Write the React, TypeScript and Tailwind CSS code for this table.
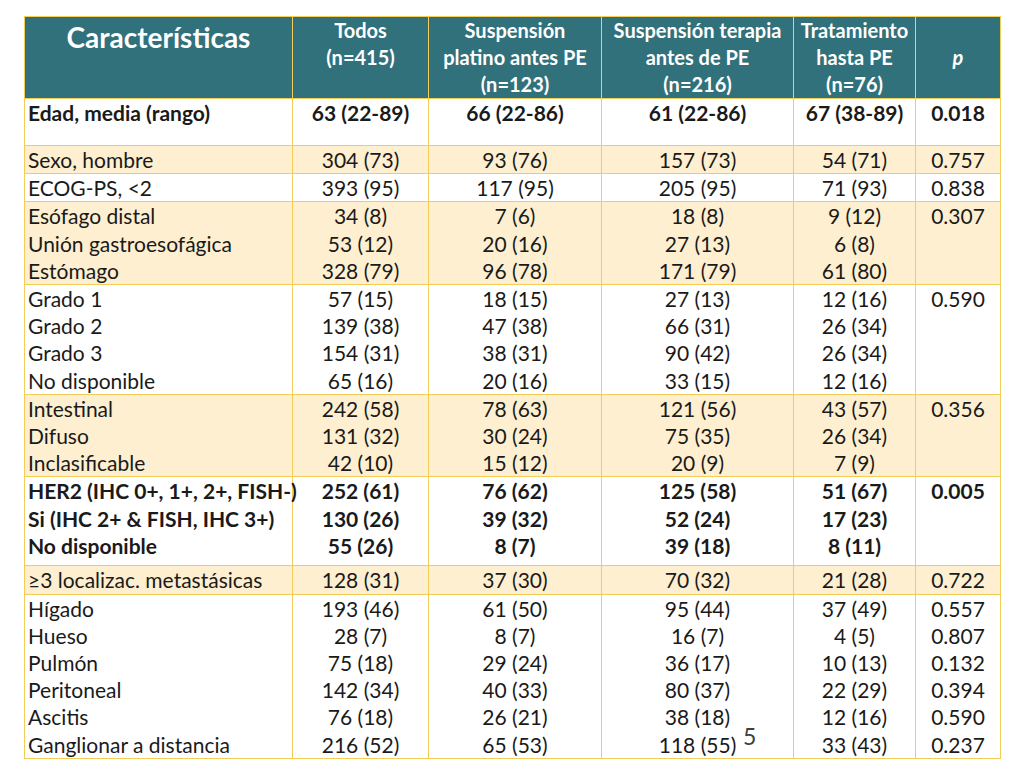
type Row = {
  label: string[];
  cols: string[][];
  p: string[];
  band?: boolean;
  bold?: boolean;
  h?: string;
};

const rows: Row[] = [
  {
    label: ["Edad, media (rango)"],
    cols: [["63 (22-89)"], ["66 (22-86)"], ["61 (22-86)"], ["67 (38-89)"]],
    p: ["0.018"],
    bold: true,
    h: "h-[47px]",
  },
  {
    label: ["Sexo, hombre"],
    cols: [["304 (73)"], ["93 (76)"], ["157 (73)"], ["54 (71)"]],
    p: ["0.757"],
    band: true,
  },
  {
    label: ["ECOG-PS, <2"],
    cols: [["393 (95)"], ["117 (95)"], ["205 (95)"], ["71 (93)"]],
    p: ["0.838"],
  },
  {
    label: ["Esófago distal", "Unión gastroesofágica", "Estómago"],
    cols: [
      ["34 (8)", "53 (12)", "328 (79)"],
      ["7 (6)", "20 (16)", "96 (78)"],
      ["18 (8)", "27 (13)", "171 (79)"],
      ["9 (12)", "6 (8)", "61 (80)"],
    ],
    p: ["0.307"],
    band: true,
  },
  {
    label: ["Grado 1", "Grado 2", "Grado 3", "No disponible"],
    cols: [
      ["57 (15)", "139 (38)", "154 (31)", "65 (16)"],
      ["18 (15)", "47 (38)", "38 (31)", "20 (16)"],
      ["27 (13)", "66 (31)", "90 (42)", "33 (15)"],
      ["12 (16)", "26 (34)", "26 (34)", "12 (16)"],
    ],
    p: ["0.590"],
  },
  {
    label: ["Intestinal", "Difuso", "Inclasificable"],
    cols: [
      ["242 (58)", "131 (32)", "42 (10)"],
      ["78 (63)", "30 (24)", "15 (12)"],
      ["121 (56)", "75 (35)", "20 (9)"],
      ["43 (57)", "26 (34)", "7 (9)"],
    ],
    p: ["0.356"],
    band: true,
  },
  {
    label: ["HER2 (IHC 0+, 1+, 2+, FISH-)", "Si (IHC 2+ & FISH, IHC 3+)", "No disponible"],
    cols: [
      ["252 (61)", "130 (26)", "55 (26)"],
      ["76 (62)", "39 (32)", "8 (7)"],
      ["125 (58)", "52 (24)", "39 (18)"],
      ["51 (67)", "17 (23)", "8 (11)"],
    ],
    p: ["0.005"],
    bold: true,
    h: "h-[89px]",
  },
  {
    label: ["≥3 localizac. metastásicas"],
    cols: [["128 (31)"], ["37 (30)"], ["70 (32)"], ["21 (28)"]],
    p: ["0.722"],
    band: true,
  },
  {
    label: ["Hígado", "Hueso", "Pulmón", "Peritoneal", "Ascitis", "Ganglionar a distancia"],
    cols: [
      ["193 (46)", "28 (7)", "75 (18)", "142 (34)", "76 (18)", "216 (52)"],
      ["61 (50)", "8 (7)", "29 (24)", "40 (33)", "26 (21)", "65 (53)"],
      ["95 (44)", "16 (7)", "36 (17)", "80 (37)", "38 (18)", "118 (55)"],
      ["37 (49)", "4 (5)", "10 (13)", "22 (29)", "12 (16)", "33 (43)"],
    ],
    p: ["0.557", "0.807", "0.132", "0.394", "0.590", "0.237"],
  },
];

const Lines = ({ items }: { items: string[] }) => (
  <>
    {items.map((t, i) => (
      <div key={i}>{t}</div>
    ))}
  </>
);

export default function App() {
  return (
    <div className="relative w-[1024px] h-[768px] bg-white font-['Lato',sans-serif] text-[#1a1a1a]">
      <div className="pt-[16px] pl-[24px]">
        <table className="border-collapse table-fixed w-[976px]">
          <colgroup>
            <col className="w-[268px]" />
            <col className="w-[136px]" />
            <col className="w-[173px]" />
            <col className="w-[192px]" />
            <col className="w-[122px]" />
            <col className="w-[85px]" />
          </colgroup>
          <thead>
            <tr className="h-[81px] bg-[#31717b] text-white font-bold text-[20px] leading-[27px]">
              <th className="border border-[#f3cd5a] align-top text-center text-[28px] leading-[40px]">
                Características
              </th>
              <th className="border border-[#f3cd5a] align-top text-center">
                Todos
                <br />
                (n=415)
              </th>
              <th className="border border-[#f3cd5a] align-top text-center">
                Suspensión
                <br />
                platino antes PE
                <br />
                (n=123)
              </th>
              <th className="border border-[#f3cd5a] align-top text-center whitespace-nowrap">
                Suspensión terapia
                <br />
                antes de PE
                <br />
                (n=216)
              </th>
              <th className="border border-[#f3cd5a] align-top text-center">
                Tratamiento
                <br />
                hasta PE
                <br />
                (n=76)
              </th>
              <th className="border border-[#f3cd5a] align-middle text-center italic">p</th>
            </tr>
          </thead>
          <tbody className="text-[21px] leading-[27.2px]">
            {rows.map((r, i) => (
              <tr
                key={i}
                className={`${r.band ? "bg-[#fdefd0]" : "bg-white"} ${r.bold ? "font-bold" : ""} ${r.h ?? ""}`}
              >
                <td className="border border-[#f3cd5a] align-top pl-[3px] whitespace-nowrap">
                  <Lines items={r.label} />
                </td>
                {r.cols.map((c, j) => (
                  <td key={j} className="border border-[#f3cd5a] align-top text-center whitespace-nowrap">
                    <Lines items={c} />
                  </td>
                ))}
                <td className="border border-[#f3cd5a] align-top text-center">
                  <Lines items={r.p} />
                </td>
              </tr>
            ))}
          </tbody>
        </table>
      </div>
      <div className="absolute left-[743px] top-[719px] text-[23px] text-[#404040]">5</div>
    </div>
  );
}
